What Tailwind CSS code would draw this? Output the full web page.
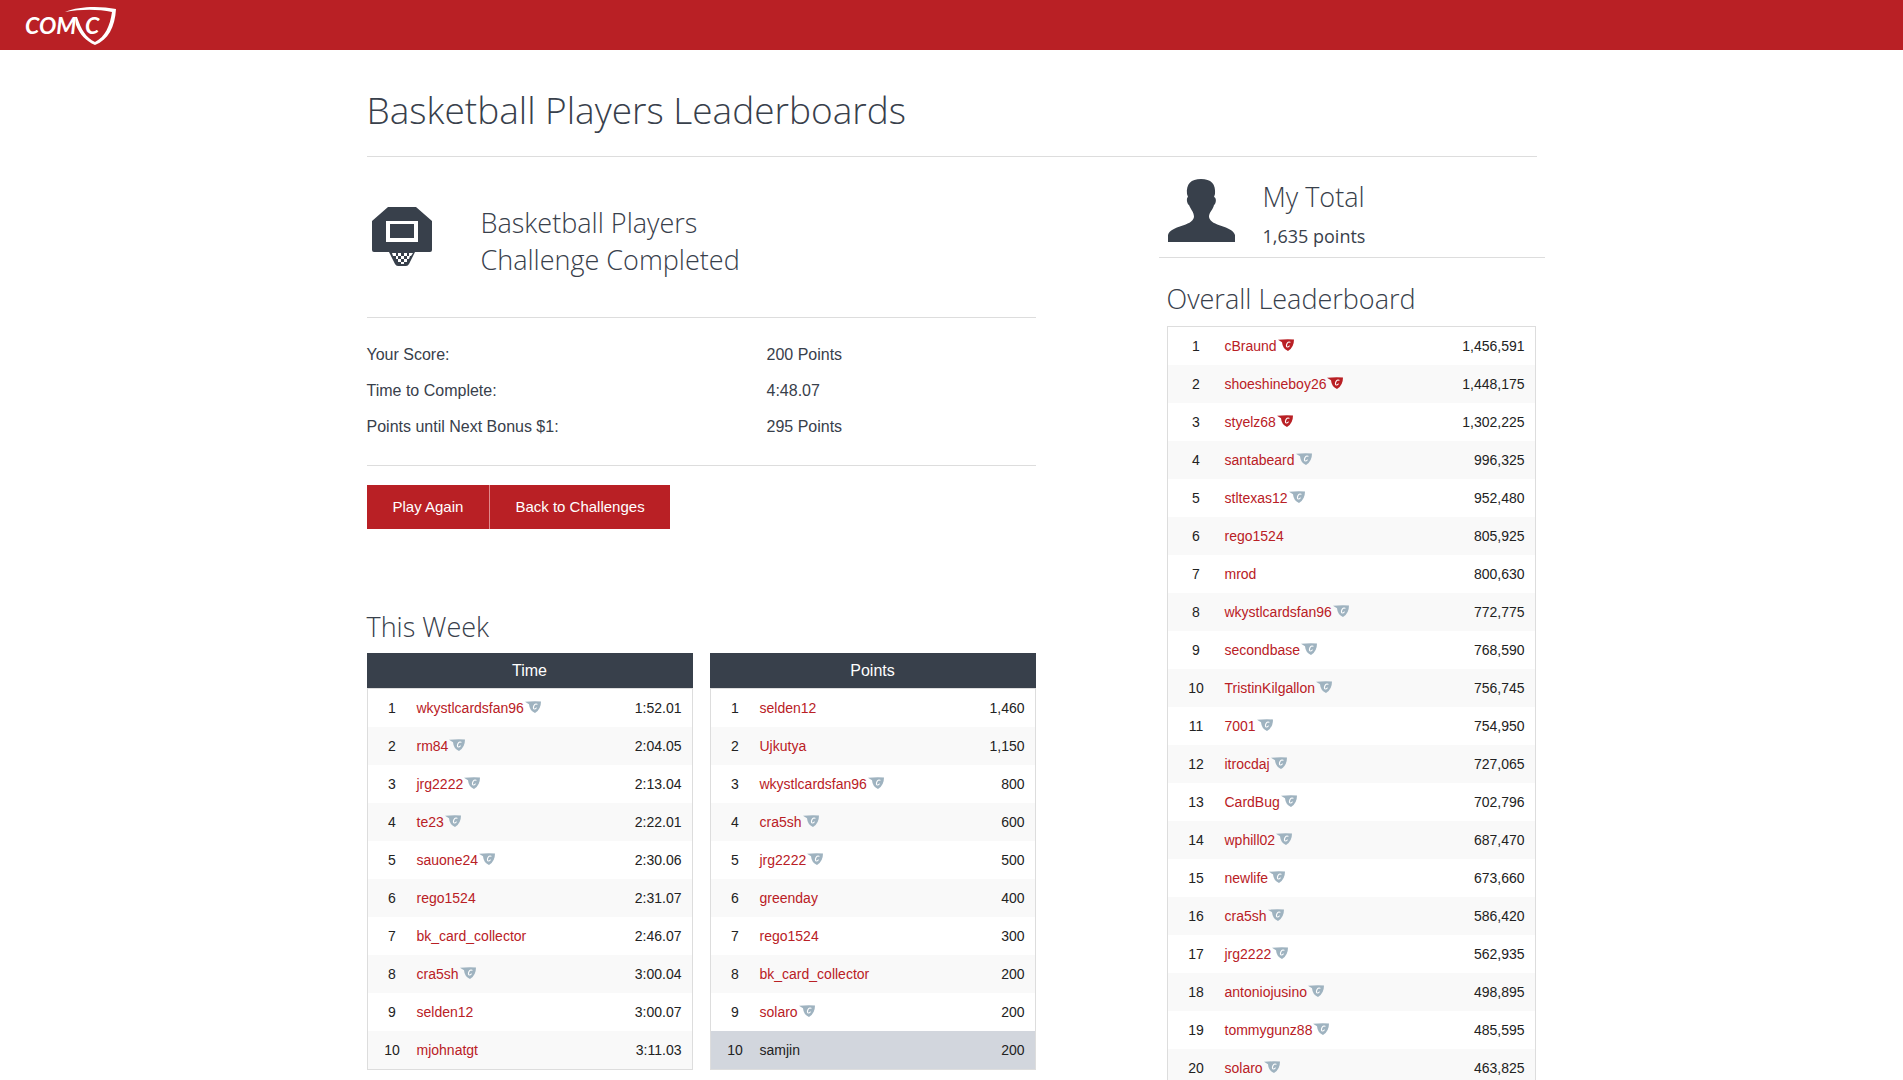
<!DOCTYPE html>
<html lang="en">
<head>
<meta charset="utf-8">
<meta name="viewport" content="width=device-width, initial-scale=1">
<title>Basketball Players Leaderboards</title>
<script src="https://cdn.jsdelivr.net/npm/@tailwindcss/browser@4"></script>
</head>
<body class="bg-white font-['Liberation_Sans',Arial,sans-serif] text-base text-[#38404b]">
<header class="flex h-[50px] items-center bg-[#b92025] px-6">
  <a href="#" aria-label="Home" class="block">
    <svg class="block h-10 w-[94px]" viewBox="0 0 94 40" fill="none">
      <g fill="#fff" font-family="Lato, sans-serif" font-weight="700" font-style="italic" font-size="23">
        <text x="1" y="29">COM</text>
        <text x="61" y="29">C</text>
      </g>
      <path d="M41 7C55 1 76 1 92 4C91 22 84 35 71 40C62 36 56 30 52 20L51 12L53 12C57 24 62 33 71 37C81 32 86 21 88 7C74 4 57 4 41 7Z" fill="#fff"/>
    </svg>
  </a>
</header>

<main class="mx-auto max-w-[1170px]">
  <h1 class="border-b border-[#ddd] pt-[35px] pb-[22px] font-['Open_Sans',sans-serif] text-[37px] leading-[49px] font-light">Basketball Players Leaderboards</h1>

  <div class="flex justify-between">
    <div class="w-[669px]">
      <section class="flex h-[161px] items-start border-b border-[#ddd] pt-[47px] pl-[5px]">
        <svg class="mt-[3px] h-[60px] w-[60px] shrink-0" viewBox="0 0 60 60" fill="#38404b">
          <path fill-rule="evenodd" d="M16 0H44L60 14V43Q60 45 58 45H43L37 57Q36 59 34 59H26Q24 59 23 57L17 45H2Q0 45 0 43V14ZM14 14V35H46V14ZM18 17H42V31H18Z"/>
          <path fill="#fff" d="M20 46h4v3h-3zM26 46h3v3h-3zM32 46h3v3h-3zM37 46h4l-2 3h-2zM24 49h2v3h-2zM29 49h3v3h-3zM35 49h3l-1 3h-2zM26 52h3v3h-3zM32 52h3v3h-3zM29 55h3v2h-3z"/>
        </svg>
        <h2 class="ml-[49px] font-['Open_Sans',sans-serif] text-[27px] leading-[37px] font-light">Basketball Players<br>Challenge Completed</h2>
      </section>

      <dl class="grid grid-cols-[400px_1fr] border-b border-[#ddd] pt-[19px] pb-5 leading-9">
        <dt>Your Score:</dt><dd>200 Points</dd>
        <dt>Time to Complete:</dt><dd>4:48.07</dd>
        <dt>Points until Next Bonus $1:</dt><dd>295 Points</dd>
      </dl>

      <div class="mt-[19px] flex text-[15px] text-white">
        <button class="h-11 border-r border-[#e08a8c] bg-[#b92025] px-[26px] pt-px">Play Again</button>
        <button class="h-11 bg-[#b92025] px-[25px] pt-px">Back to Challenges</button>
      </div>

      <h2 class="mt-20 font-['Open_Sans',sans-serif] text-[27px] leading-9 font-light">This Week</h2>
      <div class="mt-2 grid grid-cols-2 items-start gap-[17px]">
        <section>
          <h3 class="bg-[#38404b] text-center leading-[35px] text-white">Time</h3>
          <table id="time" class="w-full table-fixed border-separate border-spacing-0 border border-[#ddd] text-sm" aria-label="Time"></table>
        </section>
        <section>
          <h3 class="bg-[#38404b] text-center leading-[35px] text-white">Points</h3>
          <table id="points" class="w-full table-fixed border-separate border-spacing-0 border border-[#ddd] text-sm" aria-label="Points"></table>
        </section>
      </div>
    </div>

    <aside class="-mr-2 w-[386px]">
      <section class="flex h-[101px] items-start border-b border-[#ddd] pl-[9px]">
        <svg class="mt-[22px] h-16 w-[67px] shrink-0" viewBox="0 0 67 64" fill="#38404b">
          <path d="M33 0C43 0 48 5 47 15L46 18C49 19 48 25 46 26C45 31 41 33 41 38C43 48 64 46 67 56V63H0V56C3 46 24 48 26 38C26 33 23 31 21 26C19 25 18 19 20 18L19 15C18 5 23 0 33 0Z"/>
        </svg>
        <div class="ml-7 pt-[21px] font-['Open_Sans',sans-serif]">
          <h2 class="text-[27px] leading-[37px] font-light">My Total</h2>
          <p class="text-lg leading-[42px]">1,635 points</p>
        </div>
      </section>
      <div class="pr-[9px] pl-2">
        <h2 class="mt-[23px] mb-[9px] font-['Open_Sans',sans-serif] text-[27px] leading-9 font-light">Overall Leaderboard</h2>
        <table id="overall" class="w-full table-fixed border-separate border-spacing-0 border border-[#ddd] text-sm" aria-label="Overall Leaderboard"></table>
      </div>
    </aside>
  </div>
</main>

<script>
  // A trailing "*" marks a member badge, "!" a top-three badge.
  const boards = {
    time: ["wkystlcardsfan96* 1:52.01", "rm84* 2:04.05", "jrg2222* 2:13.04", "te23* 2:22.01", "sauone24* 2:30.06", "rego1524 2:31.07", "bk_card_collector 2:46.07", "cra5sh* 3:00.04", "selden12 3:00.07", "mjohnatgt 3:11.03"],
    points: ["selden12 1,460", "Ujkutya 1,150", "wkystlcardsfan96* 800", "cra5sh* 600", "jrg2222* 500", "greenday 400", "rego1524 300", "bk_card_collector 200", "solaro* 200", "samjin 200"],
    overall: ["cBraund! 1,456,591", "shoeshineboy26! 1,448,175", "styelz68! 1,302,225", "santabeard* 996,325", "stltexas12* 952,480", "rego1524 805,925", "mrod 800,630", "wkystlcardsfan96* 772,775", "secondbase* 768,590", "TristinKilgallon* 756,745", "7001* 754,950", "itrocdaj* 727,065", "CardBug* 702,796", "wphill02* 687,470", "newlife* 673,660", "cra5sh* 586,420", "jrg2222* 562,935", "antoniojusino* 498,895", "tommygunz88* 485,595", "solaro* 463,825"]
  };
  const currentUser = "samjin";
  const badge = color => `<svg class="ml-px mb-1 inline-block h-3 w-4 align-middle ${color}" viewBox="0 0 16 12" aria-hidden="true"><path fill="currentColor" d="M0 .8Q8 0 16 .5Q16 8.500 10 12Q4.500 9.500 4 3.200Q2 2 0 .8Z"/><path fill="none" stroke="#fff" stroke-width="1.1" stroke-linecap="round" d="M12 3.200Q10 2.200 8.800 5Q7.800 8 9.500 8Q10.500 8 11.300 7"/></svg>`;

  for (const [id, list] of Object.entries(boards)) {
    const wide = id === "overall";
    document.getElementById(id).innerHTML = "<tbody>" + list.map((entry, i) => {
      const [mark, score] = entry.split(" ");
      const name = mark.replace(/[*!]$/, "");
      const icon = mark.endsWith("*") ? badge("text-[#9fb3c0]") : mark.endsWith("!") ? badge("text-[#b92025]") : "";
      const me = name === currentUser;
      return `<tr class="h-[38px] ${me ? "bg-[#d2d6dd]" : "even:bg-[#f9f9f9]"} text-[#222]">
        <td class="${wide ? "w-[57px]" : "w-[49px]"} p-0 text-center">${i + 1}</td>
        <td class="p-0 whitespace-nowrap">${me ? name : `<a href="#" class="text-[#b92025]">${name}</a>${icon}`}</td>
        <td class="w-24 py-0 pr-[10px] pl-0 text-right">${score}</td>
      </tr>`;
    }).join("") + "</tbody>";
  }
</script>
</body>
</html>
